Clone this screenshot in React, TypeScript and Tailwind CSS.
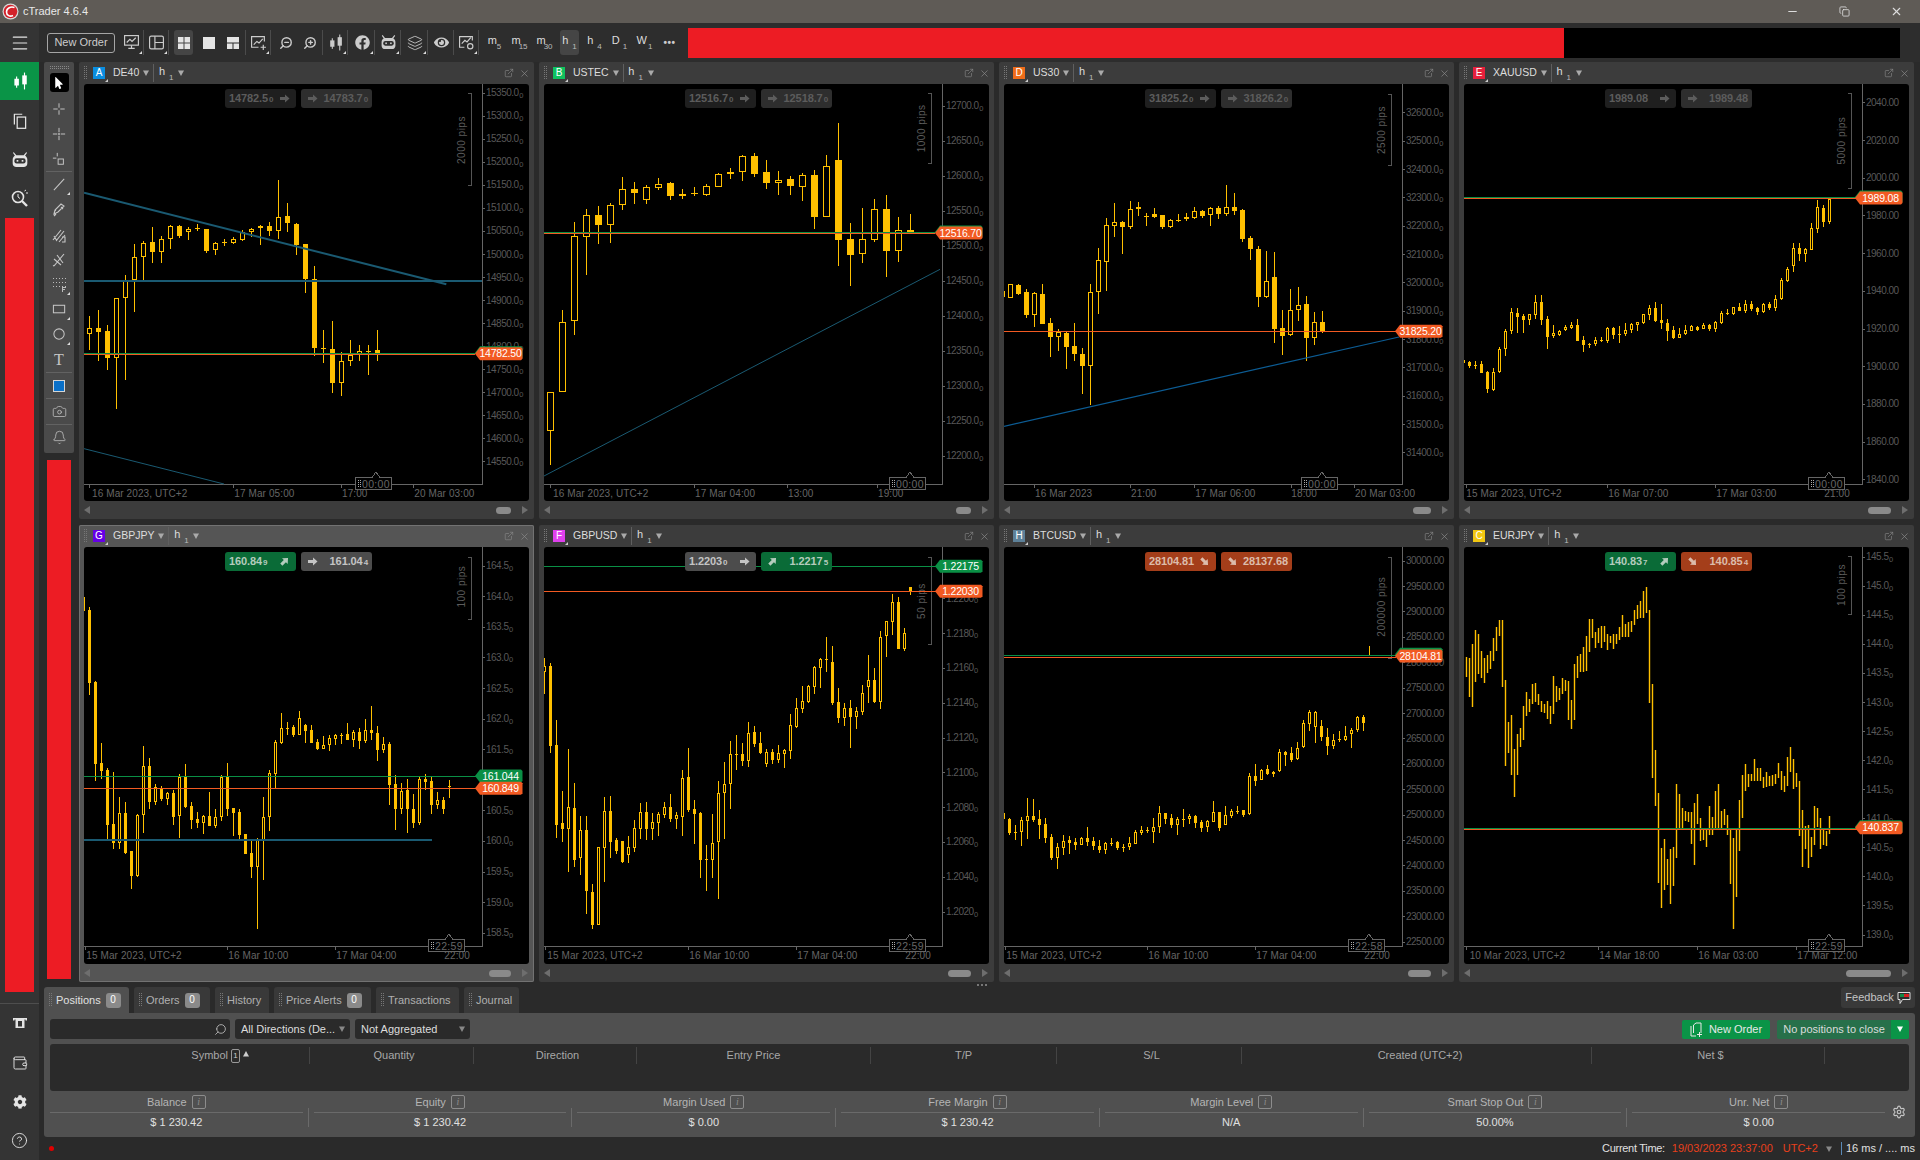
import type { ReactNode } from 'react';
import { Bell, Camera, CircleHelp, ExternalLink, Layers, Menu, Minus, Copy, Search, Settings, Wallet, X, ZoomIn, ZoomOut } from 'lucide-react';
import { FaCog, FaEye, FaFacebook, FaMousePointer } from 'react-icons/fa';

// candle rows are [high, low, bodyTop, bodyBottom, filled], measured at 3x so the numbers stay whole
type Candle = number[];
type Tone = 'idle' | 'idle2' | 'green' | 'red' | 'gray';
type Arrow = 'right' | 'up' | 'down';

interface Quote {
  text: string;
  sub?: string;
  tone: Tone;
  arrow: Arrow;
}

interface Line {
  x1: number;
  y1: number;
  x2: number;
  y2: number;
  color: string;
  width?: number;
}

interface Chart {
  symbol: string;
  letter: string;
  badge: string;
  active?: boolean;
  ox: number;
  oy: number;
  start: number;
  step: number;
  body: number;
  bars?: boolean;
  candles: Candle[];
  axis: { label: string; y: number }[];
  sub: boolean;
  lines: Line[];
  tags: { text: string; color: string; y: number }[];
  pips: { text: string; y1: number; y2: number; cy: number };
  timeY: number;
  times: { text: string; x: number; tick: number }[];
  clock: string;
  peak: number;
  bid: Quote;
  ask: Quote;
  thumb: string;
}

const AMBER = '#ffc000';
const TEAL = '#1a5a72';
const GREEN = '#0a8f45';
const ORANGE = '#f25a22';

const axis = (from: number, by: number, count: number, y0: number, dy: number, dec: number) =>
  Array.from({ length: count }, (_, i) => ({ label: (from + by * i).toFixed(dec), y: y0 + dy * i }));

const de40: Candle[] = [
  [948,1050,985,1003,0],[930,1082,985,995,1],[975,1110,993,1073,1],[895,1228,895,1073,0],[825,1140,840,893,0],[732,935,772,840,0],[723,840,730,772,0],
  [681,790,727,756,1],[708,790,718,755,0],[675,747,679,716,0],[675,713,678,708,1],[680,720,688,697,0],[671,693,683,685,1],[687,758,687,752,1],
  [725,765,730,749,0],[716,738,727,729,1],[712,733,718,728,0],[690,722,695,719,0],[683,712,686,697,0],[675,735,677,682,0],[665,708,678,692,1],
  [540,718,652,694,0],[609,696,648,668,1],[670,765,672,735,1],[732,880,732,838,1],[798,1068,838,1043,1],[990,1088,1045,1047,1],[964,1178,1047,1148,1],
  [1056,1188,1084,1148,0],[1020,1098,1066,1082,0],[1035,1082,1052,1066,0],[1035,1124,1054,1056,1],[990,1082,1050,1060,1],
];

const ustec: Candle[] = [
  [1026,1245,1026,1143,0],[780,1026,815,1026,0],[516,855,559,812,0],[477,675,496,560,0],[468,582,496,525,1],[460,579,466,524,0],[381,480,418,464,0],
  [396,462,418,428,1],[406,462,412,449,0],[385,419,401,413,0],[397,450,399,438,1],[418,447,431,437,0],[411,437,430,432,1],[403,437,409,434,0],
  [369,411,373,410,0],[354,387,367,373,0],[316,393,319,365,0],[310,381,318,372,1],[331,417,366,399,1],[363,435,389,398,0],[379,435,387,407,1],
  [369,453,376,410,0],[361,537,375,500,1],[316,500,349,500,0],[219,648,330,570,1],[519,708,567,615,1],[474,639,568,611,0],[447,576,478,569,0],
  [435,681,477,603,1],[501,636,541,602,0],[492,546,540,546,1],
];

const us30: Candle[] = [
  [621,640,621,640,1],[600,642,601,641,0],[600,632,603,630,1],[615,702,624,692,1],[624,728,628,692,0],[600,720,631,720,1],[702,819,717,759,1],
  [736,800,745,758,0],[745,855,747,789,1],[717,830,786,809,1],[793,930,810,846,1],[600,963,625,845,0],[492,690,529,623,0],[402,621,424,533,0],
  [357,459,415,425,0],[411,510,415,429,1],[351,434,376,428,0],[354,396,370,376,0],[387,426,396,398,1],[372,402,391,399,1],[393,435,393,429,1],
  [405,432,408,429,0],[390,413,408,411,1],[387,411,400,406,0],[369,405,382,401,0],[378,402,381,396,1],[369,426,373,392,0],[366,405,372,390,1],
  [303,396,370,389,0],[327,393,369,381,1],[375,474,378,465,1],[456,528,462,495,1],[486,669,495,639,1],[501,642,592,640,0],[504,777,579,735,1],
  [678,813,732,756,1],[615,756,679,754,0],[609,711,664,678,0],[636,831,660,762,1],[684,783,715,761,0],[681,747,715,741,1],
];

const xauusd: Candle[] = [
  [828,836,828,836,1],[830,851,834,846,1],[832,854,844,846,1],[832,866,841,866,1],[860,926,864,914,1],[852,920,865,918,0],[790,866,795,865,0],
  [735,815,741,796,0],[672,750,685,742,0],[672,747,687,698,1],[690,747,697,708,1],[690,723,691,707,0],[633,705,655,692,0],[633,723,654,708,1],
  [697,795,705,759,1],[723,762,747,756,0],[738,755,742,752,0],[724,742,730,739,0],[715,735,724,731,0],[705,771,723,770,1],[756,804,768,783,1],
  [777,792,781,783,1],[759,786,769,779,0],[759,774,769,771,1],[729,777,732,770,0],[729,765,732,753,1],[726,777,750,752,1],[717,756,737,750,0],
  [717,747,721,738,0],[714,741,715,722,0],[690,720,691,717,0],[663,708,672,693,0],[654,714,672,711,1],[660,735,708,717,1],[705,771,717,740,1],
  [726,765,739,762,1],[732,762,751,761,0],[723,753,739,751,0],[723,742,726,741,0],[726,741,728,738,1],[717,735,724,734,0],[720,740,724,735,1],
  [712,744,714,735,0],[681,720,688,717,0],[675,693,687,689,1],[669,692,670,690,0],[658,681,670,680,1],[648,687,660,681,0],[651,681,660,675,1],
  [669,693,673,684,1],[658,686,660,684,0],[654,678,660,672,1],[633,681,645,671,0],[582,648,589,646,0],[549,594,556,591,0],[477,564,492,547,0],
  [477,531,492,510,1],[492,534,495,510,0],[417,498,432,497,0],[348,447,370,434,0],[363,429,372,414,1],[345,420,345,415,0],
];

const gbpjpy: Candle[] = [
  [231,272,231,272,1],[262,524,270,488,1],[484,782,486,731,1],[670,776,730,752,1],[745,962,750,914,1],[756,986,913,968,1],[831,988,880,968,0],
  [847,1002,880,998,1],[993,1106,993,1067,1],[883,1070,885,1068,0],[678,938,739,886,0],[714,866,739,846,1],[792,855,802,845,0],[798,842,806,836,1],
  [815,854,820,836,0],[810,914,820,890,1],[762,955,772,889,0],[732,864,770,862,1],[846,927,858,899,1],[876,923,898,908,1],[884,941,889,908,0],
  [816,918,888,918,1],[867,923,892,917,0],[765,902,772,892,0],[729,887,770,866,1],[865,947,865,878,1],[868,961,876,944,1],[942,1002,942,1002,1],
  [963,1074,999,1040,1],[955,1226,961,1040,0],[831,1079,892,964,0],[750,933,760,892,0],[660,805,667,761,0],[579,671,625,668,0],[606,645,624,627,1],
  [616,650,621,644,1],[573,645,595,644,0],[612,668,616,632,1],[615,669,630,668,1],[657,690,666,687,1],[648,686,674,686,0],[645,693,655,674,0],
  [643,674,646,656,0],[640,671,645,647,1],[609,660,643,659,1],[631,681,637,659,0],[625,686,636,662,1],[597,670,631,662,0],[558,660,630,638,1],
  [618,722,640,689,1],[651,698,673,689,0],[666,855,672,795,1],[766,930,793,866,1],[789,881,814,866,0],[777,938,810,868,1],[822,923,868,908,1],
  [770,914,778,908,0],[762,809,777,785,1],[770,881,784,854,1],[816,866,841,855,0],[831,881,840,866,1],[781,833,799,801,1],
];

const gbpusd: Candle[] = [
  [340,446,364,380,0],[354,624,364,603,1],[525,879,600,840,1],[738,891,835,852,1],[612,981,787,851,0],[714,966,790,945,1],[813,990,856,938,0],
  [813,1107,855,1038,1],[1017,1152,1042,1140,1],[906,1140,907,1139,0],[756,1011,799,908,0],[753,939,799,891,1],[879,927,886,918,1],[887,953,889,951,1],
  [873,954,907,929,0],[825,921,850,908,0],[774,882,802,851,0],[771,885,802,851,1],[804,885,832,851,0],[801,873,808,833,0],[771,819,787,809,0],
  [747,831,787,822,1],[801,852,811,821,0],[675,873,700,815,0],[609,801,697,795,1],[765,897,793,807,1],[801,999,804,945,1],[900,1038,943,945,1],
  [807,999,895,945,0],[708,1062,745,892,0],[651,882,718,743,0],[588,792,628,716,0],[570,675,628,630,1],[594,663,628,648,1],[531,666,565,647,0],
  [543,606,561,597,1],[561,627,595,624,1],[612,666,622,656,0],[612,657,622,645,1],[600,654,624,645,0],[612,669,616,626,0],[507,642,541,617,0],
  [459,549,490,546,0],[423,504,468,492,0],[420,474,423,471,0],[363,447,366,426,0],[339,429,343,369,0],[276,381,343,345,1],[303,480,351,474,1],
  [429,534,472,519,1],[474,543,490,518,0],[465,609,490,516,1],[486,552,499,515,0],[420,510,445,500,0],[330,474,406,425,0],[369,474,406,471,1],
  [258,492,277,471,0],[228,336,229,274,0],[147,270,172,230,0],[156,313,171,312,1],[249,318,265,313,0],[126,150,126,138,1],
];

const btcusd: Candle[] = [
  [880,898,880,898,1],[895,944,898,940,1],[915,959,936,938,1],[892,977,901,935,0],[834,957,889,902,0],[837,905,889,900,1],[870,957,898,914,1],
  [894,968,912,953,1],[942,1020,951,1015,1],[969,1046,982,1013,0],[945,1005,962,983,0],[948,1001,961,969,1],[954,989,966,975,1],[952,975,955,974,0],
  [921,978,955,966,1],[951,989,964,977,1],[960,998,979,990,1],[967,1001,970,989,0],[954,978,968,971,1],[963,989,966,984,1],[972,995,981,983,1],
  [951,989,970,981,0],[931,972,937,971,0],[918,944,931,939,0],[922,938,930,932,1],[894,968,922,935,0],[858,938,880,922,0],[880,911,880,896,1],
  [882,923,895,915,1],[892,944,898,914,0],[867,920,897,899,1],[883,911,888,896,0],[884,923,887,908,1],[901,935,907,923,1],[899,935,904,922,0],
  [843,905,877,905,0],[875,932,877,925,1],[858,914,886,914,0],[868,895,874,887,0],[858,883,873,875,1],[870,890,871,885,1],[760,884,769,883,0],
  [732,797,769,782,1],[748,781,749,781,0],[736,764,748,761,1],[754,770,755,760,0],[687,755,697,754,0],[694,737,697,704,1],[682,727,700,720,1],
  [666,719,683,718,0],[601,683,610,682,0],[571,632,577,611,0],[574,668,577,620,0],[601,662,619,650,1],[625,704,652,677,1],[643,686,659,677,0],
  [633,667,657,659,1],[619,662,647,661,0],[625,683,629,643,0],[589,635,591,629,0],[586,632,591,608,1],[378,408,405,407,1],
];

const eurjpy: Candle[] = [
  [336,396],[339,456],[297,486],[255,411],[267,387],[318,399],[339,414],[330,384],[318,372],[279,348],[246,318],[225,273],[225,426],[405,663],[531,624],
  [510,690],[612,756],[567,690],[549,606],[483,585],[441,513],[462,501],[417,477],[414,471],[447,480],[468,501],[477,504],[468,522],[483,537],[393,507],
  [423,471],[429,465],[399,447],[405,438],[408,525],[465,552],[357,525],[333,399],[327,381],[306,381],[273,378],[222,321],[222,279],[261,309],[249,294],
  [243,309],[243,291],[267,315],[273,294],[267,312],[267,297],[246,285],[210,276],[237,276],[231,276],[228,261],[195,240],[180,222],[168,219],[138,219],
  [126,204],[195,474],[417,699],[615,783],[744,1014],[909,1089],[882,1035],[942,1020],[912,1077],[906,1023],[717,939],[747,849],[789,849],[798,828],
  [801,831],[801,897],[774,960],[747,837],[819,888],[849,885],[855,906],[783,870],[816,870],[738,855],[717,855],[798,849],[792,840],[810,870],[849,1017],
  [879,1152],[849,1056],[765,918],[690,819],[657,738],[687,726],[687,708],[642,708],[669,708],[669,708],[696,729],[681,726],[693,723],[690,723],[687,717],
  [654,699],[678,735],[693,741],[636,723],[606,681],[642,732],[684,726],[708,873],[795,966],[843,912],[840,969],[876,936],[783,900],[789,846],[819,912],
  [855,900],[858,903],[813,867],
];

const idle = (text: string, sub: string | undefined, tone: Tone): Quote => ({ text, sub, tone, arrow: 'right' });

const CHARTS: Chart[] = [
  {
    symbol: 'DE40', letter: 'A', badge: 'bg-[#0a8ee0]', ox: 252, oy: 252, start: 267, step: 27, body: 5, candles: de40,
    axis: axis(15350, -50, 17, 278, 69.15, 2), sub: true,
    lines: [
      { x1: 252, y1: 578, x2: 1339, y2: 853, color: TEAL, width: 2 },
      { x1: 252, y1: 840, x2: 1447, y2: 840, color: TEAL, width: 2 },
      { x1: 252, y1: 1346, x2: 672, y2: 1452, color: TEAL },
      { x1: 252, y1: 1059, x2: 1425, y2: 1059, color: GREEN },
      { x1: 252, y1: 1062, x2: 1425, y2: 1062, color: ORANGE },
    ],
    tags: [{ text: '', color: GREEN, y: 1058 }, { text: '14782.50', color: ORANGE, y: 1061 }],
    pips: { text: '2000 pips', y1: 280, y2: 556, cy: 420 }, timeY: 1453,
    times: [
      { text: '16 Mar 2023, UTC+2', x: 276, tick: 267 }, { text: '17 Mar 05:00', x: 703, tick: 700 },
      { text: '17:00', x: 1026, tick: 1023 }, { text: '20 Mar 03:00', x: 1243, tick: 1240 },
    ],
    clock: '00:00', peak: 1128, bid: idle('14782.5', '0', 'idle'), ask: idle('14783.7', '0', 'idle2'), thumb: 'w-[15px]',
  },
  {
    symbol: 'USTEC', letter: 'B', badge: 'bg-[#0fc25f]', ox: 12, oy: 102, start: 31, step: 36, body: 7, candles: ustec,
    axis: axis(12700, -50, 11, 167, 105, 2), sub: true,
    lines: [
      { x1: 12, y1: 1278, x2: 1200, y2: 658, color: TEAL },
      { x1: 12, y1: 547, x2: 1185, y2: 547, color: GREEN },
      { x1: 12, y1: 550, x2: 1185, y2: 550, color: ORANGE },
    ],
    tags: [{ text: '', color: GREEN, y: 546 }, { text: '12516.70', color: ORANGE, y: 549 }],
    pips: { text: '1000 pips', y1: 130, y2: 340, cy: 235 }, timeY: 1302,
    times: [
      { text: '16 Mar 2023, UTC+2', x: 39, tick: 30 }, { text: '17 Mar 04:00', x: 465, tick: 462 },
      { text: '13:00', x: 744, tick: 741 }, { text: '19:00', x: 1014, tick: 1011 },
    ],
    clock: '00:00', peak: 1111, bid: idle('12516.7', '0', 'idle'), ask: idle('12518.7', '0', 'idle2'), thumb: 'w-[15px]',
  },
  {
    symbol: 'US30', letter: 'D', badge: 'bg-[#ef6c1a]', ox: 15, oy: 0, start: 11, step: 24, body: 5, candles: us30,
    axis: axis(32600, -100, 13, 85, 85, 2), sub: true,
    lines: [
      { x1: 15, y1: 1027, x2: 1200, y2: 759, color: '#0c5c94', width: 1.2 },
      { x1: 15, y1: 742, x2: 1190, y2: 742, color: ORANGE },
    ],
    tags: [{ text: '31825.20', color: ORANGE, y: 742 }],
    pips: { text: '2500 pips', y1: 31, y2: 244, cy: 138 }, timeY: 1201,
    times: [
      { text: '16 Mar 2023', x: 108, tick: 106 }, { text: '21:00', x: 396, tick: 394 },
      { text: '17 Mar 06:00', x: 589, tick: 586 }, { text: '18:00', x: 877, tick: 875 }, { text: '20 Mar 03:00', x: 1068, tick: 1066 },
    ],
    clock: '00:00', peak: 969, bid: idle('31825.2', '0', 'idle'), ask: idle('31826.2', '0', 'idle2'), thumb: 'w-[18px]',
  },
  {
    symbol: 'XAUUSD', letter: 'E', badge: 'bg-[#e8203c]', ox: 15, oy: 0, start: 13, step: 18, body: 3, candles: xauusd,
    axis: axis(2040, -20, 11, 55, 113.1, 2), sub: false,
    lines: [
      { x1: 15, y1: 340, x2: 1200, y2: 340, color: GREEN },
      { x1: 15, y1: 343, x2: 1200, y2: 343, color: ORANGE },
    ],
    tags: [{ text: '', color: GREEN, y: 339 }, { text: '1989.08', color: ORANGE, y: 342 }],
    pips: { text: '5000 pips', y1: 28, y2: 311, cy: 170 }, timeY: 1201,
    times: [
      { text: '15 Mar 2023, UTC+2', x: 22, tick: 20 }, { text: '16 Mar 07:00', x: 448, tick: 445 },
      { text: '17 Mar 03:00', x: 772, tick: 769 }, { text: '21:00', x: 1096, tick: 1093 },
    ],
    clock: '00:00', peak: 1111, bid: idle('1989.08', undefined, 'idle'), ask: idle('1989.48', undefined, 'idle2'), thumb: 'w-[23px]',
  },
  {
    symbol: 'GBPJPY', letter: 'G', badge: 'bg-[#6600e6]', active: true, ox: 12, oy: 81, start: 10, step: 18, body: 3, candles: gbpjpy,
    axis: axis(164.5, -0.5, 13, 137, 91.75, 2), sub: true,
    lines: [
      { x1: 12, y1: 769, x2: 1195, y2: 769, color: GREEN },
      { x1: 12, y1: 805, x2: 1195, y2: 805, color: ORANGE },
      { x1: 12, y1: 957, x2: 1055, y2: 957, color: TEAL, width: 2 },
    ],
    tags: [{ text: '161.044', color: GREEN, y: 768 }, { text: '160.849', color: ORANGE, y: 805 }],
    pips: { text: '100 pips', y1: 112, y2: 296, cy: 200 }, timeY: 1279,
    times: [
      { text: '15 Mar 2023, UTC+2', x: 19, tick: 14 }, { text: '16 Mar 10:00', x: 445, tick: 442 },
      { text: '17 Mar 04:00', x: 769, tick: 766 }, { text: '22:00', x: 1093, tick: 1090 },
    ],
    clock: '22:59', peak: 1108,
    bid: { text: '160.84', sub: '9', tone: 'green', arrow: 'up' }, ask: { text: '161.04', sub: '4', tone: 'gray', arrow: 'right' }, thumb: 'w-[22px]',
  },
  {
    symbol: 'GBPUSD', letter: 'F', badge: 'bg-[#e040ee]', ox: 12, oy: 6, start: 13, step: 18, body: 3, candles: gbpusd,
    axis: axis(1.22, -0.002, 10, 160, 104.4, 5), sub: true,
    lines: [
      { x1: 12, y1: 64, x2: 1195, y2: 64, color: GREEN },
      { x1: 12, y1: 139, x2: 1195, y2: 139, color: ORANGE },
    ],
    tags: [{ text: '1.22175', color: GREEN, y: 64 }, { text: '1.22030', color: ORANGE, y: 139 }],
    pips: { text: '50 pips', y1: 37, y2: 298, cy: 168 }, timeY: 1204,
    times: [
      { text: '15 Mar 2023, UTC+2', x: 22, tick: 15 }, { text: '16 Mar 10:00', x: 448, tick: 445 },
      { text: '17 Mar 04:00', x: 772, tick: 769 }, { text: '22:00', x: 1096, tick: 1093 },
    ],
    clock: '22:59', peak: 1111,
    bid: { text: '1.2203', sub: '0', tone: 'gray', arrow: 'right' }, ask: { text: '1.2217', sub: '5', tone: 'green', arrow: 'up' }, thumb: 'w-[23px]',
  },
  {
    symbol: 'BTCUSD', letter: 'H', badge: 'bg-[#5d8199]', ox: 15, oy: 81, start: 13, step: 18, body: 3, candles: btcusd,
    axis: axis(30000, -500, 16, 122, 76.2, 2), sub: false,
    lines: [
      { x1: 15, y1: 404, x2: 1190, y2: 404, color: GREEN },
      { x1: 15, y1: 411, x2: 1190, y2: 411, color: ORANGE },
    ],
    tags: [{ text: '', color: GREEN, y: 403 }, { text: '28104.81', color: ORANGE, y: 408 }],
    pips: { text: '200000 pips', y1: 112, y2: 415, cy: 260 }, timeY: 1279,
    times: [
      { text: '15 Mar 2023, UTC+2', x: 22, tick: 17 }, { text: '16 Mar 10:00', x: 448, tick: 445 },
      { text: '17 Mar 04:00', x: 772, tick: 769 }, { text: '22:00', x: 1096, tick: 1093 },
    ],
    clock: '22:58', peak: 1111,
    bid: { text: '28104.81', tone: 'red', arrow: 'down' }, ask: { text: '28137.68', tone: 'red', arrow: 'down' }, thumb: 'w-[23px]',
  },
  {
    symbol: 'EURJPY', letter: 'C', badge: 'bg-[#f2c811]', ox: 15, oy: 6, start: 22, step: 9, body: 1, bars: true,
    candles: eurjpy.map(([a, b]) => [a, b, a, b, 1]),
    axis: axis(145.5, -0.5, 14, 35, 87.2, 2), sub: true,
    lines: [
      { x1: 15, y1: 850, x2: 1200, y2: 850, color: GREEN },
      { x1: 15, y1: 853, x2: 1200, y2: 853, color: ORANGE },
    ],
    tags: [{ text: '', color: GREEN, y: 845 }, { text: '140.837', color: ORANGE, y: 848 }],
    pips: { text: '100 pips', y1: 34, y2: 208, cy: 120 }, timeY: 1204,
    times: [
      { text: '10 Mar 2023, UTC+2', x: 32, tick: 22 }, { text: '14 Mar 18:00', x: 421, tick: 418 },
      { text: '16 Mar 03:00', x: 718, tick: 715 }, { text: '17 Mar 12:00', x: 1015, tick: 1012 },
    ],
    clock: '22:59', peak: 1111,
    bid: { text: '140.83', sub: '7', tone: 'green', arrow: 'up' }, ask: { text: '140.85', sub: '4', tone: 'red', arrow: 'down' }, thumb: 'w-[45px]',
  },
];

const TONES: Record<Tone, string> = {
  idle: 'bg-[#1f1f1f] text-[#5c5c5c]',
  idle2: 'bg-[#2e2e2e] text-[#5c5c5c]',
  green: 'bg-[#0a6b37] text-[#b4ccbd]',
  red: 'bg-[#a43e1a] text-[#dcbcab]',
  gray: 'bg-[#4c4c4c] text-[#c4c4c4]',
};

function Grip({ className = '' }: { className?: string }) {
  return (
    <svg width="4" height="14" viewBox="0 0 4 14" className={className} fill="#777">
      {[0, 2, 4, 6, 8, 10, 12].map((y) => (
        <g key={y}>
          <rect x="0" y={y} width="1" height="1" />
          <rect x="2" y={y} width="1" height="1" />
        </g>
      ))}
    </svg>
  );
}

function Caret({ className = '' }: { className?: string }) {
  return (
    <svg width="6" height="6" viewBox="0 0 6 6" className={className} fill="currentColor">
      <path d="M0 0.5h6L3 6z" />
    </svg>
  );
}

function Corner() {
  return <span className="absolute right-[1px] bottom-[1px] h-0 w-0 border-b-[3px] border-l-[3px] border-b-[#ddd] border-l-transparent" />;
}

function Timeframe({ main, sub, gap = 'ml-[4px]' }: { main: string; sub: string; gap?: string }) {
  return (
    <span className="flex w-[20px] items-start justify-center">
      <span className="text-[11px] leading-[13px] text-[#ddd]">{main}</span>
      <span className={`mt-[8px] text-[8px] leading-[9px] text-[#bbb] ${gap}`}>{sub}</span>
    </span>
  );
}

function QuoteArrow({ dir }: { dir: Arrow }) {
  const turn = dir === 'up' ? '-rotate-45' : dir === 'down' ? 'rotate-45' : '';
  return (
    <svg width="11" height="9" viewBox="0 0 11 9" className={turn} fill="currentColor">
      <path d="M1 3h5V0.5L10.5 4.5 6 8.5V6H1z" />
    </svg>
  );
}

function QuoteButton({ q, left, side }: { q: Quote; left: string; side: 'bid' | 'ask' }) {
  const price = (
    <span className="text-[11px] leading-none font-bold tracking-[-0.1px]">
      {q.text}
      {q.sub && <span className="ml-[1px] text-[8px]">{q.sub}</span>}
    </span>
  );
  return (
    <div className={`absolute top-[5px] flex h-[19px] w-[71px] items-center justify-between rounded-[3px] ${left} ${TONES[q.tone]} ${side === 'bid' ? 'pr-[6px] pl-[4px]' : 'pr-[4px] pl-[6px]'}`}>
      {side === 'bid' ? price : <QuoteArrow dir={q.arrow} />}
      {side === 'bid' ? <QuoteArrow dir={q.arrow} /> : price}
    </div>
  );
}

const AXIS_X = 398.5;
const LABEL_X = 402;
const BRACKET_X = 387;

function ChartPlot({ c }: { c: Chart }) {
  const px = (v: number) => (v - c.ox) / 3;
  const py = (v: number) => (v - c.oy) / 3;
  const cx = (i: number) => Math.floor(px(c.start + c.step * i)) + 0.5;
  const T = Math.round(py(c.timeY)) + 0.5;
  const peak = Math.round(px(c.peak));
  return (
    <svg className="block h-full w-full" shapeRendering="crispEdges">
      {c.candles.map(([hi, lo, top, bot, filled], i) => {
        const x = cx(i);
        if (c.bars) {
          return <line key={i} x1={x} x2={x} y1={py(hi)} y2={py(lo)} stroke={AMBER} strokeWidth="1.4" shapeRendering="auto" />;
        }
        const y1 = Math.round(py(top));
        const y2 = Math.max(Math.round(py(bot)), y1 + 1);
        return (
          <g key={i}>
            <line x1={x} x2={x} y1={Math.round(py(hi))} y2={Math.round(py(lo))} stroke={AMBER} />
            {filled ? (
              <rect x={Math.round(x - c.body / 2)} y={y1} width={c.body} height={y2 - y1} fill={AMBER} />
            ) : (
              <rect x={x - (c.body - 1) / 2} y={y1 + 0.5} width={c.body - 1} height={Math.max(y2 - y1 - 1, 1)} fill="#000" stroke={AMBER} />
            )}
          </g>
        );
      })}

      {/* axes */}
      <path d={`M0 ${T}H${AXIS_X}V0`} fill="none" stroke="#666" />
      {c.axis.map((a) => (
        <g key={a.label}>
          <line x1={AXIS_X} x2={AXIS_X + 2} y1={Math.round(py(a.y)) + 0.5} y2={Math.round(py(a.y)) + 0.5} stroke="#666" />
          <text x={LABEL_X} y={py(a.y) + 3.5} fontSize="10" letterSpacing="-0.5" fill="#585858" shapeRendering="auto">
            {c.sub ? a.label.slice(0, -1) : a.label}
            {c.sub && <tspan fontSize="7.5" dy="1.5" dx="0.5">{a.label.slice(-1)}</tspan>}
          </text>
        </g>
      ))}
      {c.times.map((t) => (
        <g key={t.text}>
          <line x1={Math.round(px(t.tick)) + 0.5} x2={Math.round(px(t.tick)) + 0.5} y1={T} y2={T + 3} stroke="#666" />
          <text x={px(t.x)} y={T + 12} fontSize="10" letterSpacing="0.1" fill="#666" shapeRendering="auto">{t.text}</text>
        </g>
      ))}

      {/* pip ruler */}
      <path d={`M${BRACKET_X - 3} ${Math.round(py(c.pips.y1)) + 0.5}H${BRACKET_X + 0.5}V${Math.round(py(c.pips.y2)) + 0.5}H${BRACKET_X - 3}`} fill="none" stroke="#555" />
      <text
        transform={`translate(${BRACKET_X - 6} ${py(c.pips.cy)}) rotate(-90)`}
        textAnchor="middle"
        fontSize="10"
        letterSpacing="0.5"
        fill="#5c5c5c"
        shapeRendering="auto"
      >
        {c.pips.text}
      </text>

      {c.lines.map((l, i) => {
        const flat = l.y1 === l.y2;
        return (
          <line
            key={i}
            x1={px(l.x1)}
            x2={px(l.x2)}
            y1={flat ? Math.round(py(l.y1)) + 0.5 : py(l.y1)}
            y2={flat ? Math.round(py(l.y2)) + 0.5 : py(l.y2)}
            stroke={l.color}
            strokeWidth={l.width ?? 1}
            shapeRendering={flat ? 'crispEdges' : 'auto'}
          />
        );
      })}

      {c.tags.map((t) => {
        const y = py(t.y);
        return (
          <g key={t.text + t.color} shapeRendering="auto">
            <path d={`M391 ${y}L396 ${y - 6.5}H437L438.5 ${y - 5}V${y + 5}L437 ${y + 6.5}H396Z`} fill={t.color} />
            <text x="416.5" y={y + 3.5} fontSize="10.5" letterSpacing="-0.2" textAnchor="middle" fill="#fff">{t.text}</text>
          </g>
        );
      })}

      {/* bar clock */}
      <path
        d={`M${peak - 20.5} ${T - 7}H${peak - 4}L${peak} ${T - 12.5}L${peak + 4} ${T - 7}H${peak + 15.5}V${T + 5}H${peak - 20.5}Z`}
        fill="#000"
        stroke="#666"
      />
      {[0, 2, 4, 6].map((d) => (
        <g key={d} fill="#aaa">
          <rect x={peak - 18} y={T - 5 + d} width="1" height="1" />
          <rect x={peak - 16} y={T - 5 + d} width="1" height="1" />
        </g>
      ))}
      <text x={peak - 14} y={T + 3.5} fontSize="10.5" letterSpacing="0.3" fill="#666" shapeRendering="auto">{c.clock}</text>
    </svg>
  );
}

function ChartPanel({ c }: { c: Chart }) {
  return (
    <div className={`flex min-h-0 flex-col rounded-[2px] ${c.active ? 'bg-[#555] shadow-[inset_0_0_0_1px_#727272]' : 'bg-[#3c3c3c]'}`}>
      <div className="flex h-[22px] shrink-0 items-center">
        <Grip className="ml-[5px]" />
        <span className={`relative ml-[5px] flex h-[12px] w-[12px] items-center justify-center text-[10px] leading-none text-white ${c.badge}`}>
          {c.letter}
          <span className="absolute -right-[3px] -bottom-[3px] h-0 w-0 border-b-[3px] border-l-[3px] border-b-[#ccc] border-l-transparent" />
        </span>
        <span className="ml-[8px] text-[10.5px] text-[#ddd]">{c.symbol}</span>
        <Caret className="ml-[4px] text-[#aaa]" />
        <span className="ml-[4px] h-[18px] w-px bg-[#5f5f5f]" />
        <span className="ml-[2px]">
          <Timeframe main="h" sub="1" />
        </span>
        <Caret className="ml-[2px] text-[#aaa]" />
        <ExternalLink size={10} className="mr-[5px] ml-auto text-[#8a8a8a]" strokeWidth={1.5} />
        <X size={11} className="mr-[4px] text-[#8a8a8a]" strokeWidth={1.5} />
      </div>
      <div className="relative mx-[5px] min-h-0 flex-1 overflow-hidden rounded-[3px] bg-black">
        <ChartPlot c={c} />
        <QuoteButton q={c.bid} left="left-[141px]" side="bid" />
        <QuoteButton q={c.ask} left="left-[217px]" side="ask" />
      </div>
      <div className="flex h-[18px] shrink-0 items-center pr-[6px] pl-[5px] text-[#6e6e6e]">
        <svg width="6" height="8" viewBox="0 0 6 8" fill="currentColor"><path d="M6 0v8L0 4z" /></svg>
        <span className={`ml-auto h-[7px] rounded-full bg-[#8a8a8a] ${c.thumb}`} />
        <svg width="6" height="8" viewBox="0 0 6 8" fill="currentColor" className="ml-[11px]"><path d="M0 0v8l6-4z" /></svg>
      </div>
    </div>
  );
}

function Tb({ children, active, menu, sep, className = '' }: { children: ReactNode; active?: boolean; menu?: boolean; sep?: boolean; className?: string }) {
  return (
    <div className={`relative flex h-[25px] w-[25px] shrink-0 items-center justify-center text-[#ccc] ${sep ? 'border-r border-r-[#4b4b4b]' : ''} ${className}`}>
      {active && <span className="absolute inset-x-[3px] inset-y-0 rounded-[3px] bg-[#454545]" />}
      <span className="relative flex items-center justify-center">{children}</span>
      {menu && <Corner />}
    </div>
  );
}

function Ico({ children, size = 17 }: { children: ReactNode; size?: number }) {
  return (
    <svg width={size} height={size} viewBox="0 0 16 16" fill="none" stroke="currentColor" strokeWidth="1.1">
      {children}
    </svg>
  );
}

function BotFace({ size = 17, bg = '#2d2d2d' }: { size?: number; bg?: string }) {
  return (
    <svg width={size} height={size} viewBox="0 0 16 16" fill="currentColor">
      <path d="M2.500 1L4.700 3.800h6.600L13.500 1l.8.6-1.800 2.700C13.500 4.900 14.500 6 14.500 7.500V11c0 1.800-1.400 3.200-3.200 3.200H4.700C2.900 14.200 1.500 12.800 1.500 11V7.500C1.500 6 2.500 4.900 3.500 4.300L1.700 1.600z" />
      <rect x="3" y="6.500" width="10" height="4.500" rx="2" fill={bg} />
      <rect x="5" y="8" width="1.500" height="1.500" />
      <rect x="9.500" y="8" width="1.500" height="1.500" />
    </svg>
  );
}

function Candles({ size = 17 }: { size?: number }) {
  return (
    <svg width={size} height={size} viewBox="0 0 16 16" fill="currentColor">
      <rect x="3" y="6" width="4" height="6" />
      <rect x="4.500" y="4" width="1" height="10" />
      <rect x="10" y="3" width="4" height="8" />
      <rect x="11.500" y="0.500" width="1" height="15" />
    </svg>
  );
}

function TopToolbar() {
  return (
    <div className="flex h-[39px] shrink-0 items-center bg-[#2d2d2d] pl-[8px]">
      <button className="flex h-[20px] w-[68px] shrink-0 items-center justify-center rounded-[3px] border border-[#a5a5a5] text-[11px] leading-none text-[#ccc]">New Order</button>
      <div className="ml-[4px] flex items-center">
        <Tb menu sep>
          <Ico>
            <rect x="1.500" y="1.500" width="13" height="9" />
            <path d="M3.500 8l3-3 2 2 3.500-3.500M5 13.500h6M8 10.500v3" />
          </Ico>
        </Tb>
        <Tb menu sep>
          <Ico>
            <rect x="1.500" y="2" width="13" height="12" rx="1.500" />
            <path d="M6.500 2v12M6.500 8h8" />
          </Ico>
        </Tb>
        <Tb active className="ml-[2px]">
          <svg width="12" height="12" viewBox="0 0 12 12" fill="#e5e5e5">
            <rect width="5.500" height="5.500" />
            <rect x="6.500" width="5.500" height="5.500" />
            <rect y="6.500" width="5.500" height="5.500" />
            <rect x="6.500" y="6.500" width="5.500" height="5.500" />
          </svg>
        </Tb>
        <Tb>
          <svg width="12" height="12" viewBox="0 0 12 12" fill="#e5e5e5"><rect width="12" height="12" /></svg>
        </Tb>
        <Tb sep>
          <svg width="12" height="12" viewBox="0 0 12 12" fill="#e5e5e5">
            <rect width="12" height="5.500" />
            <rect y="6.500" width="5.500" height="5.500" />
            <rect x="6.500" y="6.500" width="5.500" height="5.500" />
          </svg>
        </Tb>
        <Tb menu sep>
          <Ico>
            <path d="M13.500 7V2.500h-12v10H8M3.500 10l3-3 2 1.500 3.500-4M12.500 10v5M10 12.500h5" />
          </Ico>
        </Tb>
        <Tb className="ml-[2px]"><ZoomOut size={14} strokeWidth={2.4} className="-scale-x-100" /></Tb>
        <Tb sep><ZoomIn size={14} strokeWidth={2.4} className="-scale-x-100" /></Tb>
        <Tb menu sep><Candles /></Tb>
        <Tb menu sep className="ml-[2px]"><FaFacebook size={15} /></Tb>
        <Tb menu sep className="ml-[1px]"><BotFace /></Tb>
        <Tb menu sep className="ml-[2px]"><Layers size={16} strokeWidth={1.3} /></Tb>
        <Tb sep className="ml-[1px]"><FaEye size={15} /></Tb>
        <Tb menu sep>
          <Ico>
            <path d="M13.500 6V2.500h-12v10H6M3.500 9l3-3 2 1.500 3.500-4" />
            <circle cx="11.500" cy="11.500" r="2.500" />
          </Ico>
        </Tb>
        <span className="w-[3px]" />
        <Tb><Timeframe main="m" sub="5" gap="ml-0" /></Tb>
        <Tb><Timeframe main="m" sub="15" gap="-ml-[2px]" /></Tb>
        <Tb><Timeframe main="m" sub="30" gap="-ml-[2px]" /></Tb>
        <Tb active><Timeframe main="h" sub="1" /></Tb>
        <Tb><Timeframe main="h" sub="4" /></Tb>
        <Tb><Timeframe main="D" sub="1" gap="ml-[3px]" /></Tb>
        <Tb><Timeframe main="W" sub="1" gap="ml-[1px]" /></Tb>
        <Tb><span className="text-[10px] leading-none font-bold tracking-[0.5px] text-[#ccc]">•••</span></Tb>
      </div>
      <div className="mr-[20px] ml-auto flex h-[30px] shrink-0">
        <div className="w-[876px] bg-[#ed1c24]" />
        <div className="w-[336px] bg-black" />
      </div>
    </div>
  );
}

function Draw({ children, active, menu }: { children: ReactNode; active?: boolean; menu?: boolean }) {
  return (
    <div className={`relative flex h-[25px] w-[19px] shrink-0 items-center justify-center ${active ? 'text-white' : 'text-[#c6c6c6]'}`}>
      {active && <span className="absolute inset-x-0 inset-y-[3px] rounded-[3px] bg-black" />}
      <span className="relative flex items-center justify-center">{children}</span>
      {menu && <span className="absolute -right-[1px] bottom-[2px] h-0 w-0 border-b-[3px] border-l-[3px] border-b-[#ddd] border-l-transparent" />}
    </div>
  );
}

function DrawToolbar() {
  const rule = <div className="h-px w-[26px] shrink-0 bg-[#626262]" />;
  return (
    <div className="flex h-[391px] shrink-0 flex-col items-center rounded-[2px] bg-[#4a4a4a]">
      <div className="mt-[4px] mb-[1px] grid h-[3px] w-[19px] shrink-0 grid-cols-[repeat(10,1px)] gap-x-[1px] gap-y-[1px]">
        {Array.from({ length: 20 }, (_, i) => <span key={i} className="h-px w-px bg-[#888]" />)}
      </div>
      <Draw active><FaMousePointer size={12} /></Draw>
      <div className="h-[1px] shrink-0" />
      <Draw>
        <Ico size={14}><path d="M8 1.500v5M8 9.500v5M1.500 8h5M9.500 8h5" /></Ico>
      </Draw>
      <Draw>
        <Ico size={14}>
          <path d="M8 1v5M8 10v5M1 8h5M10 8h5" />
          <path d="M8 7v2M7 8h2" />
        </Ico>
      </Draw>
      <Draw>
        <Ico size={14}>
          <path d="M6 1v4M1 7h4" />
          <rect x="7" y="8" width="6" height="6" />
        </Ico>
      </Draw>
      {rule}
      <Draw menu>
        <Ico size={15}><path d="M2 14L13 2" /></Ico>
      </Draw>
      <Draw>
        <Ico size={16}><path d="M3 12l1-4 6-6 3 2-6 6zM3 14l2-2M10 5l2 2M5 8c-2 1-2 3-1 4" /></Ico>
      </Draw>
      <Draw>
        <Ico size={16}><path d="M2 13L10 3M5 14l8-10M8 15l6-7M3 9l3 5M11 10h3v5h-3" /></Ico>
      </Draw>
      <Draw>
        <Ico size={16}><path d="M3 14L13 2M6 3l6 8M3 7l7 6M2 14l2-1" /></Ico>
      </Draw>
      <Draw menu>
        <svg width="15" height="15" viewBox="0 0 15 15" fill="#bbb">
          {[1, 5, 9].map((y) => [1, 4, 7, 10, 13].map((x) => <rect key={`${x}-${y}`} x={x} y={y} width="1" height="1" />))}
          <path d="M10 10h4v1h-3v1h2v1h-2v2h-1z" />
        </svg>
      </Draw>
      <Draw menu>
        <Ico size={15}><rect x="1.500" y="3.500" width="12" height="8" /></Ico>
      </Draw>
      <Draw menu>
        <Ico size={15}><circle cx="7.500" cy="7.500" r="5.500" /></Ico>
      </Draw>
      <Draw><span className="text-[16px] leading-none [font-family:'Liberation_Serif',serif]">T</span></Draw>
      {rule}
      <Draw>
        <span className="block h-[12px] w-[12px] border border-[#d5d5d5] bg-[#0a70c8]" />
      </Draw>
      {rule}
      <Draw><Camera size={15} strokeWidth={1.2} /></Draw>
      {rule}
      <Draw><Bell size={15} strokeWidth={1.2} /></Draw>
    </div>
  );
}

function Rail() {
  const item = 'flex h-[39px] shrink-0 items-center justify-center text-[#e4e4e4]';
  return (
    <div className="flex w-[39px] shrink-0 flex-col bg-[#343434]">
      <div className={item}><Menu size={20} strokeWidth={1.4} /></div>
      <div className="flex h-[38px] shrink-0 items-center justify-center bg-[#0a9447] text-white"><Candles size={18} /></div>
      <div className="h-[1px] shrink-0" />
      <div className={item}>
        <Ico size={18}>
          <path d="M10 2H3v9" />
          <rect x="5.500" y="4.500" width="7.500" height="10" />
        </Ico>
      </div>
      <div className={item}><BotFace size={18} bg="#343434" /></div>
      <div className={item}>
        <svg width="19" height="19" viewBox="0 0 19 19" fill="none" stroke="currentColor" strokeWidth="1.6">
          <circle cx="8" cy="8" r="5.500" />
          <path d="M12 12l5 5" strokeWidth="2.400" />
          <path d="M8 5v3l2 1.500" strokeWidth="1" />
          <path d="M14.500 2l1.500-1M16 4h2" strokeWidth="1" />
        </svg>
      </div>
      <div className="mx-[5px] min-h-0 flex-1 bg-[#ed1c24]" />
      <div className="mt-[11px] h-px shrink-0 bg-[#4e4e4e]" />
      <div className={item}>
        <svg width="16" height="16" viewBox="0 0 16 16" fill="currentColor">
          <path d="M1 2h14v2.500h-1.500V3.500h-1V12h-9V3.500h-1v1H1zM6 5v5.500h4V5z" />
          <rect x="7" y="6" width="2" height="3" fill="#343434" />
        </svg>
      </div>
      <div className={item}><Wallet size={16} strokeWidth={1.4} /></div>
      <div className={item}><FaCog size={14} /></div>
      <div className={item}><CircleHelp size={17} strokeWidth={1.3} /></div>
    </div>
  );
}

const TABS: { label: string; count?: string; width: string }[] = [
  { label: 'Positions', count: '0', width: 'w-[85px]' },
  { label: 'Orders', count: '0', width: 'w-[76px]' },
  { label: 'History', width: 'w-[54px]' },
  { label: 'Price Alerts', count: '0', width: 'w-[97px]' },
  { label: 'Transactions', width: 'w-[83px]' },
  { label: 'Journal', width: 'w-[55px]' },
];

const COLUMNS: { label: string; width: string }[] = [
  { label: 'Quantity', width: 'w-[164px] pl-[5px]' },
  { label: 'Direction', width: 'w-[163px] pl-[5px]' },
  { label: 'Entry Price', width: 'w-[234px]' },
  { label: 'T/P', width: 'w-[186px]' },
  { label: 'S/L', width: 'w-[185px] pl-[5px]' },
  { label: 'Created (UTC+2)', width: 'w-[350px] pl-[7px]' },
  { label: 'Net $', width: 'w-[233px] pl-[5px]' },
];

const SUMMARY = [
  ['Balance', '$ 1 230.42'],
  ['Equity', '$ 1 230.42'],
  ['Margin Used', '$ 0.00'],
  ['Free Margin', '$ 1 230.42'],
  ['Margin Level', 'N/A'],
  ['Smart Stop Out', '50.00%'],
  ['Unr. Net', '$ 0.00'],
];

function Dock() {
  return (
    <div className="mr-[5px] flex shrink-0 flex-col">
      <div className="flex h-[26px] items-start gap-[5px]">
        {TABS.map((t, i) => (
          <div
            key={t.label}
            className={`flex h-[26px] shrink-0 items-center gap-[3px] rounded-t-[3px] pl-[5px] text-[11px] ${t.width} ${i === 0 ? 'bg-[#505050] text-[#e0e0e0]' : 'bg-[#393939] text-[#b0b0b0]'}`}
          >
            <Grip />
            <span>{t.label}</span>
            {t.count && (
              <span className="ml-[2px] flex h-[15px] w-[15px] items-center justify-center rounded-[3px] bg-[#8a8a8a] text-[10px] leading-none text-white">{t.count}</span>
            )}
          </div>
        ))}
        <div className="ml-auto flex h-[21px] w-[74px] items-center justify-center gap-[3px] rounded-[3px] bg-[#393939] text-[11px] text-[#c4c4c4]">
          Feedback
          <svg width="14" height="14" viewBox="0 0 14 14">
            <path d="M1 1.500h12v7H5.500L3 12.500V8.500H1z" fill="#2d2d2d" stroke="#ddd" />
            <rect x="7" y="3" width="5" height="3" fill="#d81e1e" />
            <rect x="3" y="3" width="4" height="3" fill="#128a45" />
          </svg>
        </div>
      </div>

      <div className="flex h-[124px] flex-col rounded-tr-[3px] rounded-b-[3px] bg-[#505050] px-[6px] pt-[6px]">
        <div className="flex h-[20px] shrink-0 items-center gap-[5px] text-[11px] text-[#ddd]">
          <div className="flex h-[20px] w-[180px] items-center justify-end rounded-[3px] bg-[#2a2a2a] pr-[3px] text-[#bbb]">
            <Search size={13} className="-scale-x-100" strokeWidth={1.6} />
          </div>
          <div className="flex h-[20px] w-[115px] items-center justify-between rounded-[3px] bg-[#2a2a2a] pr-[5px] pl-[6px]">
            All Directions (De...
            <Caret className="text-[#888]" />
          </div>
          <div className="flex h-[20px] w-[115px] items-center justify-between rounded-[3px] bg-[#2a2a2a] pr-[5px] pl-[6px]">
            Not Aggregated
            <Caret className="text-[#888]" />
          </div>
          <div className="ml-auto flex h-[19px] w-[88px] items-center justify-center gap-[6px] rounded-[2px] bg-[#0a9447] text-[#e8e8e8]">
            <svg width="13" height="15" viewBox="0 0 13 15" fill="none" stroke="currentColor">
              <path d="M3.500 11V3L6 1h5v10M1 4v10h5" />
              <path d="M9.500 10v5M7 12.500h5" />
            </svg>
            New Order
          </div>
          <div className="ml-[2px] flex h-[19px] w-[132px] items-center rounded-[2px] bg-[#27704a] text-[#dcdcdc]">
            <span className="flex-1 text-center">No positions to close</span>
            <span className="flex h-full w-[18px] items-center justify-center rounded-r-[2px] bg-[#0a9447] text-white"><Caret /></span>
          </div>
        </div>

        <div className="mt-[5px] h-[47px] shrink-0 rounded-[3px] bg-[#2a2a2a] pt-[3px] text-[11px] text-[#a8a8a8]">
          <div className="flex h-[17px]">
            <div className="flex w-[260px] shrink-0 items-center justify-end gap-[3px] border-r border-r-[#444] pr-[60px]">
              Symbol
              <span className="flex h-[14px] w-[9px] items-center justify-center rounded-[2px] border border-[#999] text-[8px] leading-none text-[#ccc]">1</span>
              <Caret className="mb-[4px] rotate-180 text-[#ccc]" />
            </div>
            {COLUMNS.map((col) => (
              <div key={col.label} className={`flex shrink-0 items-center justify-center border-r border-r-[#444] ${col.width}`}>{col.label}</div>
            ))}
          </div>
        </div>

        <div className="flex min-h-0 flex-1 items-start pt-[1px]">
          <div className="flex w-[1835px] shrink-0 items-center gap-[5px]">
            {SUMMARY.map(([label, value], i) => (
              <div key={label} className="contents">
                {i > 0 && <span className="mt-[13px] h-[19px] w-px shrink-0 bg-[#6a6a6a]" />}
                <div className="min-w-0 flex-1 text-center text-[11px]">
                  <div className="flex h-[21px] items-center justify-center gap-[5px] border-b border-b-[#6a6a6a] text-[#b4b4b4]">
                    {label}
                    <span className="flex h-[14px] w-[14px] items-center justify-center rounded-[2px] border border-[#8c8c8c] text-[10px] leading-none text-[#8c8c8c] italic [font-family:'Liberation_Serif',serif]">i</span>
                  </div>
                  <div className="mt-[3px] leading-[13px] text-[#e0e0e0]">{value}</div>
                </div>
              </div>
            ))}
          </div>
          <Settings size={14} className="mt-[13px] ml-[7px] shrink-0 text-[#c4c4c4]" strokeWidth={2} />
        </div>
      </div>
    </div>
  );
}

export default function App() {
  return (
    <div className="flex h-[1160px] w-[1920px] flex-col overflow-hidden bg-[#2a2a2a] [font-family:'Liberation_Sans',Arial,sans-serif]">
      <div className="flex h-[23px] shrink-0 items-center bg-[#5f5b56] pl-[2px] text-[11px] text-[#e8e8e8]">
        <svg width="17" height="17" viewBox="0 0 17 17" fill="none">
          <circle cx="8.500" cy="8.500" r="8" fill="#d8d8d8" />
          <circle cx="8.500" cy="8.500" r="6.800" fill="#d3222a" />
          <path d="M12.500 4.500C9 3 4.500 5 4.500 9c0 3.500 3.500 5 6.500 3.500" stroke="#fff" strokeWidth="1.600" />
        </svg>
        <span className="ml-[4px]">cTrader 4.6.4</span>
        <div className="ml-auto flex items-center text-[#ddd]">
          <Minus size={13} strokeWidth={2} className="mr-[40px]" />
          <Copy size={11} strokeWidth={1.8} className="mr-[40px]" />
          <X size={13} strokeWidth={2} className="mr-[17px]" />
        </div>
      </div>

      <div className="flex min-h-0 flex-1">
        <Rail />
        <div className="flex min-w-0 flex-1 flex-col">
          <TopToolbar />
          <div className="flex h-[920px] shrink-0 pl-[5px]">
            <div className="flex w-[30px] shrink-0 flex-col gap-[7px] pb-[3px]">
              <DrawToolbar />
              <div className="mx-[3px] min-h-0 flex-1 bg-[#ed1c24]" />
            </div>
            <div className="ml-[5px] grid w-[1835px] shrink-0 grid-cols-4 grid-rows-[457px_457px] gap-x-[5px] gap-y-[6px]">
              {CHARTS.map((c) => (
                <ChartPanel key={c.symbol} c={c} />
              ))}
            </div>
          </div>
          <div className="flex h-[5px] shrink-0 items-center justify-center gap-[2px] pl-[5px]">
            <span className="h-[2px] w-[2px] bg-[#777]" />
            <span className="h-[2px] w-[2px] bg-[#777]" />
            <span className="h-[2px] w-[2px] bg-[#777]" />
          </div>
          <div className="pl-[5px]">
            <Dock />
          </div>
          <div className="flex min-h-0 flex-1 items-center pr-[5px] pl-[10px] text-[11px] text-[#e0e0e0]">
            <span className="h-[5px] w-[5px] rounded-full bg-[#e00000]" />
            <span className="ml-auto tracking-[-0.3px]">Current Time:</span>
            <span className="ml-[7px] text-[#e8401c]">19/03/2023 23:37:00</span>
            <span className="ml-[10px] text-[#e8401c]">UTC+2</span>
            <Caret className="ml-[8px] text-[#888]" />
            <span className="ml-[9px] h-[13px] w-px bg-[#5a8ab8]" />
            <span className="ml-[4px]">16 ms / .... ms</span>
          </div>
        </div>
      </div>
    </div>
  );
}
